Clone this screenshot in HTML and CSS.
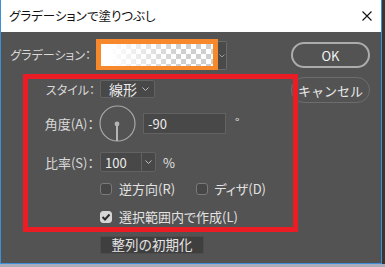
FILE: index.html
```html
<!DOCTYPE html>
<html lang="ja">
<head>
    <meta charset="UTF-8">
    <title>グラデーションで塗りつぶし</title>
    <link rel="stylesheet" href="styles.css">
</head>
<body>
    <div class="window">
        <div class="titlebar">
            <span class="title">グラデーションで塗りつぶし</span>
            <svg class="close" width="10" height="10" viewBox="0 0 10 10">
                <path d="M0.5 0.5L9.5 9.5M9.5 0.5L0.5 9.5" stroke="#111" stroke-width="1.1" fill="none"/>
            </svg>
        </div>
        <div class="dialog">
            <div class="form">
                <div class="row row-gradient">
                    <span class="label label-kana">グラデーション：</span>
                    <div class="swatch"><div class="swatch-fill"></div></div>
                    <div class="swatch-drop">
                        <svg width="6" height="4" viewBox="0 0 6 4"><path d="M0.5 0.5L3 3L5.5 0.5" stroke="#9a9a9a" fill="none"/></svg>
                    </div>
                </div>
                <div class="row row-style">
                    <span class="label label-kana">スタイル：</span>
                    <div class="select select-style">
                        <span class="select-text">線形</span>
                        <svg width="7" height="4" viewBox="0 0 7 4"><path d="M0.5 0.5L3.5 3.5L6.5 0.5" stroke="#bdbdbd" fill="none"/></svg>
                    </div>
                </div>
                <div class="row row-angle">
                    <span class="label">角度(A)：</span>
                    <svg class="dial" width="37" height="37" viewBox="0 0 37 37">
                        <circle cx="18.5" cy="18.5" r="17.5" stroke="#a8a8a8" stroke-width="1.2" fill="none"/>
                        <line x1="18" y1="19" x2="18" y2="36" stroke="#b4b4b4" stroke-width="2"/>
                        <circle cx="18" cy="19" r="2.4" fill="#b4b4b4"/>
                    </svg>
                    <div class="input input-angle">-90</div>
                    <span class="unit unit-deg">°</span>
                </div>
                <div class="row row-ratio">
                    <span class="label">比率(S)：</span>
                    <div class="select select-ratio">
                        <span class="select-text">100</span>
                        <span class="select-arrow">
                            <svg width="7" height="4" viewBox="0 0 7 4"><path d="M0.5 0.5L3.5 3.5L6.5 0.5" stroke="#bdbdbd" fill="none"/></svg>
                        </span>
                    </div>
                    <span class="unit">%</span>
                </div>
                <div class="row row-check">
                    <span class="label"></span>
                    <label class="check"><span class="box"></span>逆方向(R)</label>
                    <label class="check check-dither"><span class="box"></span>ディザ(D)</label>
                </div>
                <div class="row row-check row-check2">
                    <span class="label"></span>
                    <label class="check"><span class="box box-on">
                        <svg width="10" height="8" viewBox="0 0 10 8"><path d="M1.5 4L4 6.5L8.5 1.5" stroke="#2b2b2b" stroke-width="2" fill="none"/></svg>
                    </span>選択範囲内で作成(L)</label>
                </div>
                <div class="row row-reset">
                    <span class="label"></span>
                    <button class="reset">整列の初期化</button>
                </div>
            </div>
            <div class="buttons">
                <button class="btn btn-ok">OK</button>
                <button class="btn btn-cancel">キャンセル</button>
            </div>
            <div class="highlight"></div>
        </div>
    </div>
</body>
</html>
```

FILE: styles.css
```css
body {
    margin: 0;
    width: 385px;
    height: 267px;
    overflow: hidden;
    background: linear-gradient(to bottom, #363636 264px, #a9acba 264px);
    font-family: "Noto Sans CJK JP", "Noto Sans", sans-serif;
    font-feature-settings: "palt";
}
.window {
    width: 380px;
    height: 263px;
    border-left: 1px solid #3c8fd8;
    border-right: 1px solid #3c8fd8;
    border-bottom: 1px solid #3c8fd8;
    display: flex;
    flex-direction: column;
}
.titlebar {
    height: 32px;
    background-color: #fff;
    display: flex;
    align-items: center;
    justify-content: space-between;
    padding: 0 9px 0 8px;
}
.title {
    font-size: 12.5px;
    color: #111;
    margin-top: -1px;
}
.close {
    margin-bottom: 1px;
}
.dialog {
    position: relative;
    flex: 1;
    background-color: #535353;
    display: flex;
}
.form {
    width: 290px;
    padding-top: 7px;
    color: #d8d8d8;
    font-size: 13px;
}
.row {
    display: flex;
    align-items: center;
}
.label {
    width: 99px;
    flex: none;
    text-align: right;
    padding-right: 6px;
    box-sizing: border-box;
    white-space: nowrap;
}
.label-kana {
    font-size: 12px;
    padding-right: 5px;
}
.row-gradient {
    height: 31px;
}
.row-gradient .label {
    width: 95px;
    padding-right: 5px;
}
.swatch {
    width: 122px;
    height: 31px;
    box-sizing: border-box;
    border: 5px solid #f7882c;
    border-bottom-width: 4px;
    background-image: repeating-conic-gradient(#cfcfcf 0 25%, #fff 0 50%);
    background-size: 10px 10px;
    position: relative;
    z-index: 1;
}
.swatch-fill {
    height: 100%;
    background: linear-gradient(to right, #fff 8%, rgba(255, 255, 255, 0) 70%);
}
.swatch-drop {
    width: 8px;
    height: 27px;
    margin-top: 2px;
    border: 1px solid #6a6a6a;
    border-left: none;
    background-color: #4a4a4a;
    border-radius: 0 2px 2px 0;
    display: flex;
    align-items: center;
    justify-content: center;
}
.row-style {
    margin-top: 10px;
    height: 18px;
}
.select {
    height: 18px;
    box-sizing: border-box;
    border: 1px solid #626262;
    border-radius: 2px;
    background-color: #484848;
    display: flex;
    align-items: center;
    color: #ececec;
}
.select-style {
    width: 55px;
    padding: 0 5px 0 8px;
    justify-content: space-between;
}
.select-style .select-text {
    font-size: 14px;
}
.row-angle {
    margin-top: 7px;
    height: 37px;
}
.dial {
    flex: none;
    margin-left: -1px;
}
.input {
    height: 21px;
    box-sizing: border-box;
    border: 1px solid #626262;
    background-color: #484848;
    color: #ececec;
    display: flex;
    align-items: center;
}
.input-angle {
    width: 83px;
    margin-left: 7px;
    padding-left: 4px;
    font-size: 13px;
}
.unit {
    margin-left: 7px;
    color: #e0e0e0;
}
.unit-deg {
    margin-left: 9px;
    margin-top: -4px;
    font-size: 12px;
}
.row-ratio {
    margin-top: 10px;
    height: 20px;
}
.select-ratio {
    width: 56px;
    height: 20px;
}
.select-ratio .select-text {
    width: 41px;
    padding-left: 4px;
    box-sizing: border-box;
    font-size: 13px;
    border-right: 1px solid #626262;
    height: 100%;
    display: flex;
    align-items: center;
}
.select-arrow {
    flex: 1;
    display: flex;
    justify-content: center;
}
.row-check {
    margin-top: 10px;
    height: 13px;
}
.row-check2 {
    margin-top: 15px;
}
.check {
    display: flex;
    align-items: center;
    gap: 7px;
    font-size: 13px;
    color: #e2e2e2;
    width: 100px;
    white-space: nowrap;
}
.box {
    width: 12px;
    height: 12px;
    box-sizing: border-box;
    border: 1px solid #7a7a7a;
    border-radius: 3px;
    background-color: #474747;
    display: flex;
    align-items: center;
    justify-content: center;
}
.box-on {
    background-color: #d6d6d6;
    border-color: #d6d6d6;
}
.row-reset {
    margin-top: 13px;
    height: 18px;
}
.reset {
    width: 104px;
    height: 18px;
    padding: 0;
    border: 1px solid #4c4c4c;
    background-color: #3f3f3f;
    color: #e4e4e4;
    font-family: inherit;
    font-size: 13.5px;
    line-height: 1;
    border-radius: 1px;
}
.buttons {
    padding-top: 10px;
    display: flex;
    flex-direction: column;
    gap: 9px;
}
.btn {
    width: 79px;
    height: 26px;
    border-radius: 13px;
    background-color: #535353;
    font-family: inherit;
    font-size: 13px;
    padding: 0;
}
.btn-ok {
    border: 2px solid #acacac;
    color: #f2f2f2;
}
.btn-cancel {
    border: 1px solid #6d6d6d;
    color: #e8e8e8;
}
.highlight {
    position: absolute;
    left: 22px;
    top: 42px;
    width: 275px;
    height: 158px;
    box-sizing: border-box;
    border: 5px solid #ec1c24;
    pointer-events: none;
}
```
